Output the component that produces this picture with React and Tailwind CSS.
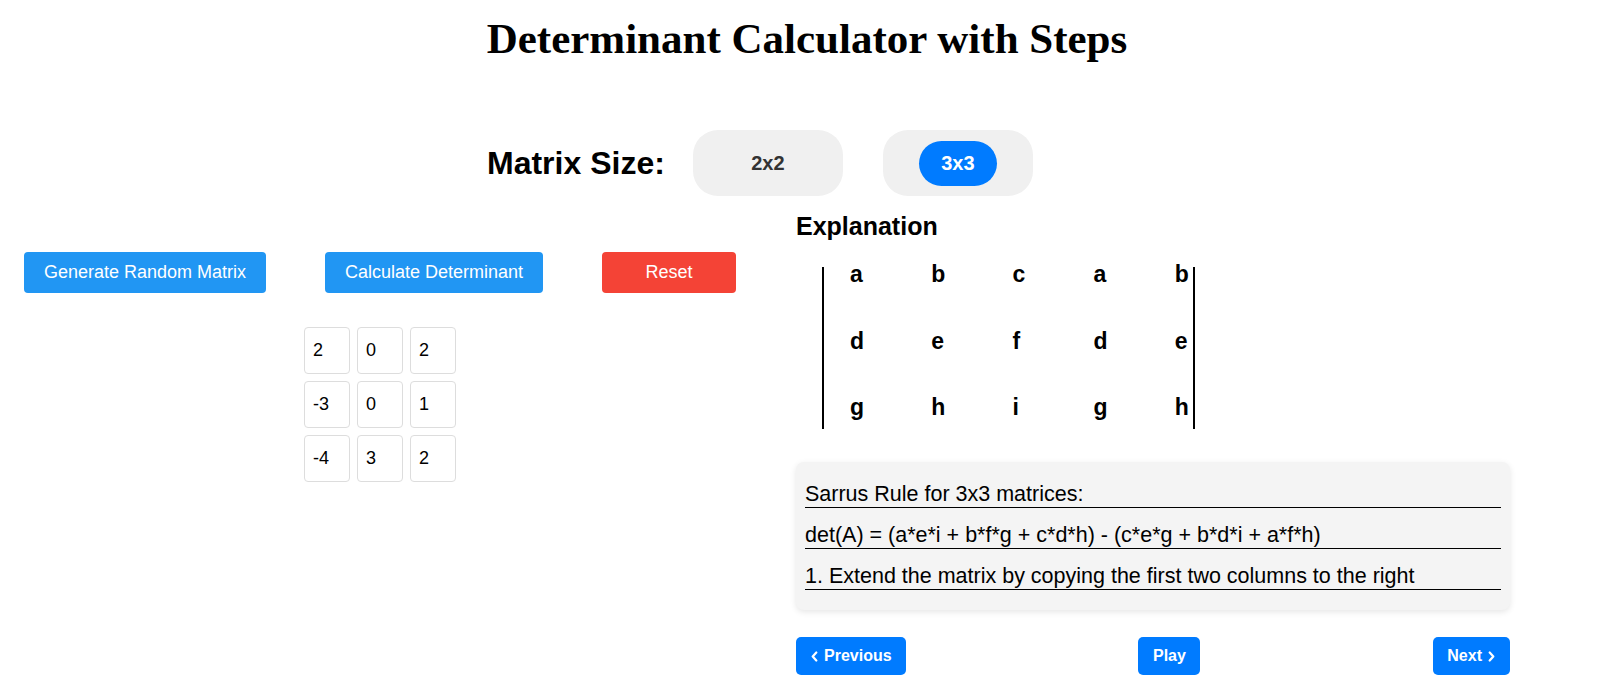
import React, { useState } from 'react';

const startMatrix = [
  [2, 0, 2],
  [-3, 0, 1],
  [-4, 3, 2],
];

const extended = [
  ['a', 'b', 'c', 'a', 'b'],
  ['d', 'e', 'f', 'd', 'e'],
  ['g', 'h', 'i', 'g', 'h'],
];

const steps = [
  'Sarrus Rule for 3x3 matrices:',
  'det(A) = (a*e*i + b*f*g + c*d*h) - (c*e*g + b*d*i + a*f*h)',
  '1. Extend the matrix by copying the first two columns to the right',
];

function Chevron({ dir }) {
  return (
    <svg width="7" height="11" viewBox="0 0 7 11" fill="none" stroke="currentColor" strokeWidth="2.2" strokeLinecap="round" strokeLinejoin="round">
      {dir === 'left' ? <path d="M5.3 1.5 L1.7 5.5 L5.3 9.5" /> : <path d="M1.7 1.5 L5.3 5.5 L1.7 9.5" />}
    </svg>
  );
}

export default function App() {
  const [size, setSize] = useState(3);
  const [matrix] = useState(startMatrix);

  return (
    <div className="w-[1600px] h-[691px] overflow-hidden bg-white text-black font-['Liberation_Sans',Arial,sans-serif]">
      {/* Title */}
      <h1 className="pt-[14px] pl-[14px] text-center font-['Liberation_Serif','Times_New_Roman',serif] text-[43px] leading-[49px] font-bold">
        Determinant Calculator with Steps
      </h1>

      {/* Matrix size toggle */}
      <div className="mt-[67px] flex items-center pl-[487px]">
        <h2 className="text-[32px] font-bold leading-[37px]">Matrix Size:</h2>
        <div className="ml-[28px] flex gap-[40px]">
          {[2, 3].map((n) => (
            <div key={n} className="w-[150px] h-[66px] flex items-center justify-center rounded-[25px] bg-[#f0f0f0]">
              <button
                onClick={() => setSize(n)}
                className={`px-[22px] py-[11px] rounded-full text-[20px] leading-[23px] font-bold ${
                  size === n ? 'bg-[#007bff] text-white' : 'text-[#333]'
                }`}
              >
                {n}x{n}
              </button>
            </div>
          ))}
        </div>
      </div>

      <div className="mt-[16px] flex">
        {/* Left: controls + input grid */}
        <div className="w-[760px] flex flex-col items-center">
          <div className="mt-[40px] flex gap-[59px]">
            <button className="h-[41px] px-[20px] rounded-[4px] bg-[#2196f3] text-white text-[18px]">Generate Random Matrix</button>
            <button className="h-[41px] px-[20px] rounded-[4px] bg-[#2196f3] text-white text-[18px]">Calculate Determinant</button>
            <button className="h-[41px] w-[134px] rounded-[4px] bg-[#f44336] text-white text-[18px]">Reset</button>
          </div>
          <div className="mt-[34px] grid grid-cols-3 gap-[7px]">
            {matrix.flat().map((v, i) => (
              <div key={i} className="w-[46px] h-[47px] flex items-center pl-[8px] border border-[#ddd] rounded-[4px] text-[18px]">
                {v}
              </div>
            ))}
          </div>
        </div>

        {/* Right: explanation */}
        <div className="ml-[36px] w-[714px] flex flex-col">
          <h3 className="text-[25px] leading-[28px] font-bold">Explanation</h3>
          <div className="mt-[27px] ml-[26px] w-fit h-[162px] border-l-2 border-r-2 border-black pl-[26px] pr-[4px]">
            <div className="-mt-[5px] grid grid-cols-[81.2px_81.2px_81.2px_81.2px_auto] gap-y-[41.7px] text-[23px] leading-[25px] font-bold">
              {extended.flat().map((l, i) => (
                <span key={i}>{l}</span>
              ))}
            </div>
          </div>

          <div className="mt-[33px] flex flex-col gap-[15px] rounded-[8px] bg-[#f4f4f4] px-[9px] py-[20px] shadow-[0_2px_6px_rgba(0,0,0,0.1)]">
            {steps.map((s) => (
              <p key={s} className="text-[21.5px] leading-[25px] border-b border-black">{s}</p>
            ))}
          </div>

          <div className="mt-[27px] flex justify-between">
            <button className="h-[38px] px-[14.5px] flex items-center gap-[6.5px] rounded-[5px] bg-[#007bff] text-white text-[16px] font-bold">
              <Chevron dir="left" />
              Previous
            </button>
            <button className="h-[38px] px-[14.5px] rounded-[5px] bg-[#007bff] text-white text-[16px] font-bold">Play</button>
            <button className="h-[38px] px-[14.5px] flex items-center gap-[6.5px] rounded-[5px] bg-[#007bff] text-white text-[16px] font-bold">
              Next
              <Chevron dir="right" />
            </button>
          </div>
        </div>
      </div>
    </div>
  );
}
